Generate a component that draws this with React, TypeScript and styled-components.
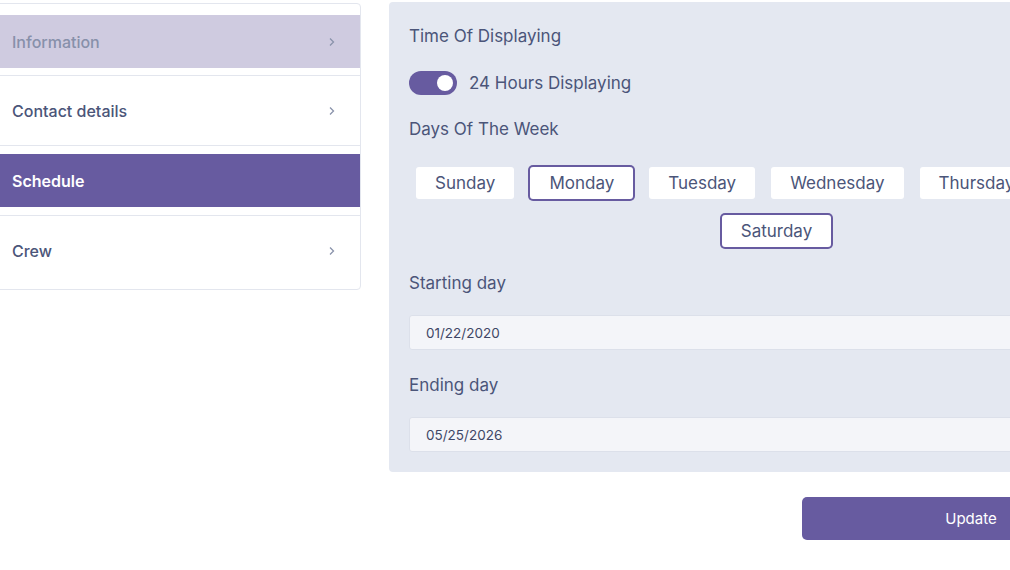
import React from 'react';
import styled, { createGlobalStyle } from 'styled-components';

const GlobalStyle = createGlobalStyle`
  body {
    margin: 0;
    overflow: hidden;
    background: #ffffff;
    font-family: Inter, 'Noto Sans', sans-serif;
    color: #4b5579;
  }
`;

const Layout = styled.div`
  display: grid;
  grid-template-columns: 369px 775px;
  column-gap: 28px;
  align-items: start;
  margin-left: -8px;
  padding-top: 2px;
`;

const SideNav = styled.nav`
  margin-top: 1px;
  border: 1px solid #e3e6ee;
  border-radius: 4px;
  background: #ffffff;
`;

const NavSlot = styled.div`
  padding: 8px 0;
  border-top: 1px solid #e3e6ee;
  &:first-child {
    border-top: none;
    padding: 11px 0 7px;
  }
  &:last-child {
    padding-bottom: 12px;
  }
`;

const NavLink = styled.a<{ $state?: 'open' | 'active' }>`
  display: flex;
  align-items: center;
  justify-content: space-between;
  height: 53px;
  padding: 0 25px 0 19px;
  font-size: 16px;
  font-weight: ${(p) => (p.$state === 'active' ? 600 : 500)};
  background: ${(p) =>
    p.$state === 'active' ? '#675ba0' : p.$state === 'open' ? '#cfcbe0' : 'transparent'};
  color: ${(p) =>
    p.$state === 'active' ? '#ffffff' : p.$state === 'open' ? '#8790aa' : '#4b5579'};
`;

const Chevron = () => (
  <svg width="6" height="10" viewBox="0 0 6 10" fill="none">
    <path d="M1 1.5L4.5 5L1 8.5" stroke="#8a93ab" strokeWidth="1.3" />
  </svg>
);

const Main = styled.main`
  display: flex;
  flex-direction: column;
`;

const Panel = styled.section`
  background: #e4e8f1;
  border-radius: 4px;
  padding: 22px 20px 20px;
`;

const Heading = styled.div<{ $gap?: number }>`
  font-size: 17px;
  line-height: 24px;
  color: #4b5579;
  margin-bottom: ${(p) => p.$gap ?? 20}px;
`;

const ToggleRow = styled.label`
  display: flex;
  align-items: center;
  gap: 12px;
  font-size: 17px;
  color: #4b5579;
  margin-bottom: 22px;
`;

const Switch = styled.span<{ $on: boolean }>`
  position: relative;
  width: 48px;
  height: 24px;
  border-radius: 12px;
  background: ${(p) => (p.$on ? '#675ba0' : '#c3c8d6')};
  &::after {
    content: '';
    position: absolute;
    top: 4px;
    left: ${(p) => (p.$on ? '28px' : '4px')};
    width: 16px;
    height: 16px;
    border-radius: 50%;
    background: #ffffff;
  }
`;

const Days = styled.div`
  display: flex;
  flex-wrap: wrap;
  justify-content: center;
  row-gap: 16px;
  margin: 26px -4px 24px;
`;

const Day = styled.button<{ $picked?: boolean }>`
  margin: 0 8px;
  height: 32px;
  padding: 0 19px;
  border: none;
  border-radius: 3px;
  background: #ffffff;
  box-shadow: ${(p) => (p.$picked ? '0 0 0 2px #675ba0' : 'none')};
  font-family: inherit;
  font-size: 17px;
  color: #4b5579;
`;

const DateField = styled.div`
  height: 33px;
  display: flex;
  align-items: center;
  padding: 0 16px;
  border: 1px solid #dce0ea;
  border-radius: 3px;
  background: #f4f5f9;
  font-size: 13.5px;
  color: #3f4766;
  margin-bottom: 23px;
  &:last-child {
    margin-bottom: 0;
  }
`;

const Actions = styled.div`
  display: flex;
  justify-content: flex-end;
  margin-top: 25px;
`;

const UpdateButton = styled.button`
  width: 338px;
  height: 43px;
  margin-right: 24px;
  border: none;
  border-radius: 5px;
  background: #675ba0;
  color: #ffffff;
  font-family: inherit;
  font-size: 15px;
`;

const navItems: { label: string; state?: 'open' | 'active' }[] = [
  { label: 'Information', state: 'open' },
  { label: 'Contact details' },
  { label: 'Schedule', state: 'active' },
  { label: 'Crew' },
];

const days = ['Sunday', 'Monday', 'Tuesday', 'Wednesday', 'Thursday', 'Friday', 'Saturday'];
const picked = ['Monday', 'Saturday'];

export default function App() {
  return (
    <>
      <GlobalStyle />
      <Layout>
        <SideNav>
          {navItems.map((item) => (
            <NavSlot key={item.label}>
              <NavLink $state={item.state}>
                {item.label}
                {item.state !== 'active' && <Chevron />}
              </NavLink>
            </NavSlot>
          ))}
        </SideNav>
        <Main>
          <Panel>
            <Heading $gap={23}>Time Of Displaying</Heading>
            <ToggleRow>
              <Switch $on />
              24 Hours Displaying
            </ToggleRow>
            <Heading $gap={0}>Days Of The Week</Heading>
            <Days>
              {days.map((d) => (
                <Day key={d} $picked={picked.includes(d)}>
                  {d}
                </Day>
              ))}
            </Days>
            <Heading>Starting day</Heading>
            <DateField>01/22/2020</DateField>
            <Heading>Ending day</Heading>
            <DateField>05/25/2026</DateField>
          </Panel>
          <Actions>
            <UpdateButton>Update</UpdateButton>
          </Actions>
        </Main>
      </Layout>
    </>
  );
}
